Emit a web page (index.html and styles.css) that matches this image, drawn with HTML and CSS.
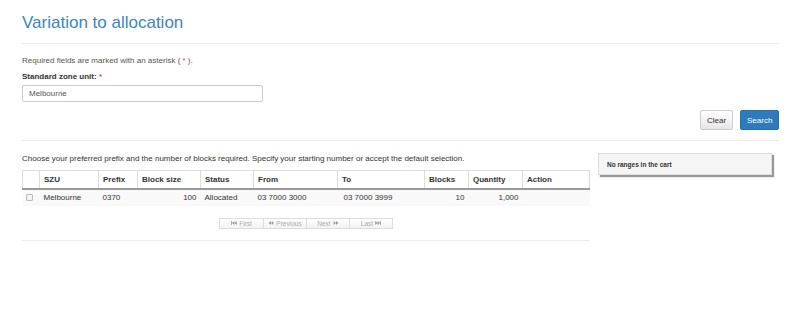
FILE: index.html
```html
<!DOCTYPE html>
<html lang="en">
<head>
    <meta charset="UTF-8">
    <title>Variation to allocation</title>
    <link rel="stylesheet" href="styles.css">
</head>
<body>
    <div class="page">
        <h1 class="page-title">Variation to allocation</h1>
        <hr class="rule">

        <p class="required-note">Required fields are marked with an asterisk ( <span class="star">*</span> ).</p>
        <label class="field-label">Standard zone unit: <span class="star">*</span></label>
        <input type="text" class="field-input" value="Melbourne">

        <div class="actions">
            <button class="btn btn-default">Clear</button>
            <button class="btn btn-primary">Search</button>
        </div>
        <hr class="rule">

        <div class="results">
            <div class="results-main">
                <p class="intro">Choose your preferred prefix and the number of blocks required. Specify your starting number or accept the default selection.</p>

                <table class="ranges">
                    <colgroup>
                        <col style="width: 17px">
                        <col style="width: 59px">
                        <col style="width: 39px">
                        <col style="width: 63px">
                        <col style="width: 53px">
                        <col style="width: 84px">
                        <col style="width: 87px">
                        <col style="width: 44px">
                        <col style="width: 54px">
                        <col style="width: 67px">
                    </colgroup>
                    <thead>
                        <tr>
                            <th></th>
                            <th>SZU</th>
                            <th>Prefix</th>
                            <th>Block size</th>
                            <th>Status</th>
                            <th>From</th>
                            <th>To</th>
                            <th>Blocks</th>
                            <th>Quantity</th>
                            <th>Action</th>
                        </tr>
                    </thead>
                    <tbody>
                        <tr>
                            <td><span class="checkbox"></span></td>
                            <td>Melbourne</td>
                            <td>0370</td>
                            <td class="num">100</td>
                            <td>Allocated</td>
                            <td>03 7000 3000</td>
                            <td class="to">03 7000 3999</td>
                            <td class="num">10</td>
                            <td class="num">1,000</td>
                            <td></td>
                        </tr>
                    </tbody>
                </table>

                <div class="pager">
                    <span class="pager-btn">
                        <svg class="pager-icon" viewBox="0 0 14 10"><rect x="0" y="0" width="2" height="10"/><polygon points="2,5 8,0 8,10"/><polygon points="8,5 14,0 14,10"/></svg>
                        First
                    </span>
                    <span class="pager-btn">
                        <svg class="pager-icon" viewBox="0 0 12 10"><polygon points="0,5 6,0 6,10"/><polygon points="6,5 12,0 12,10"/></svg>
                        Previous
                    </span>
                    <span class="pager-btn">
                        Next
                        <svg class="pager-icon" viewBox="0 0 12 10"><polygon points="0,0 6,5 0,10"/><polygon points="6,0 12,5 6,10"/></svg>
                    </span>
                    <span class="pager-btn">
                        Last
                        <svg class="pager-icon" viewBox="0 0 14 10"><polygon points="0,0 6,5 0,10"/><polygon points="6,0 12,5 6,10"/><rect x="12" y="0" width="2" height="10"/></svg>
                    </span>
                </div>
                <hr class="rule">
            </div>

            <div class="results-side">
                <div class="cart">No ranges in the cart</div>
            </div>
        </div>
    </div>
</body>
</html>
```

FILE: styles.css
```css
* {
    box-sizing: border-box;
}

body {
    margin: 0;
    background: #fff;
    color: #333;
    font-family: 'Liberation Sans', Arial, sans-serif;
    font-size: 8px;
    line-height: 11px;
}

.page {
    padding: 0 21px 0 22px;
}

.page-title {
    margin: 13px 0 10px;
    font-size: 17px;
    line-height: 20px;
    font-weight: normal;
    color: #3a85c6;
}

.rule {
    margin: 0;
    border: 0;
    border-top: 1px solid #eee;
}

.required-note {
    margin: 11px 0 0;
    color: #555;
}

.star {
    color: #d9534f;
}

.field-label {
    display: block;
    margin-top: 5px;
    font-weight: bold;
}

.field-input {
    display: block;
    margin-top: 3px;
    width: 241px;
    height: 17px;
    padding: 0 6px;
    border: 1px solid #ccc;
    border-radius: 2px;
    font-family: inherit;
    font-size: 8px;
    color: #555;
}

.actions {
    display: flex;
    justify-content: flex-end;
    gap: 7px;
    margin: 8px 0 10px;
}

.btn {
    height: 20px;
    padding: 0 6px;
    border-radius: 2px;
    font-family: inherit;
    font-size: 8px;
    cursor: pointer;
}

.btn-default {
    width: 33px;
    background: linear-gradient(#fff, #e6e6e6);
    border: 1px solid #ccc;
    color: #333;
}

.btn-primary {
    width: 39px;
    background: #2d7bbd;
    border: 1px solid #2a6fa9;
    color: #fff;
}

.results {
    display: flex;
    gap: 8px;
}

.results-main {
    width: 568px;
}

.intro {
    margin: 12px 0 6px;
}

.ranges {
    width: 568px;
    table-layout: fixed;
    border-collapse: collapse;
}

.ranges th {
    height: 18px;
    padding: 0 4px;
    text-align: left;
    font-weight: bold;
    border: 1px solid #ddd;
    border-bottom: 2px solid #999;
}

.ranges td {
    height: 17px;
    padding: 0 4px;
    background: #f9f9f9;
    white-space: nowrap;
}

.ranges td.num {
    text-align: right;
}

.ranges td.to {
    padding-left: 6px;
}

.checkbox {
    display: block;
    width: 7px;
    height: 7px;
    margin-left: -1px;
    border: 1px solid #bbb;
    border-radius: 1px;
    background: #f3f3f3;
}

.pager {
    display: flex;
    justify-content: center;
    margin: 12px 0 11px;
}

.pager-btn {
    display: flex;
    align-items: center;
    justify-content: center;
    gap: 2px;
    width: 44px;
    height: 11px;
    border: 1px solid #ddd;
    margin-left: -1px;
    background: linear-gradient(#fff, #f2f2f2);
    color: #aaa;
    font-size: 6.5px;
}

.pager-btn:first-child {
    width: 45px;
    margin-left: 0;
}

.pager-icon {
    width: 6px;
    height: 4px;
    fill: #999;
}

.results-side {
    width: 174px;
    padding-top: 12px;
}

.cart {
    height: 22px;
    padding: 0 8px;
    display: flex;
    align-items: center;
    background: #f5f5f5;
    border: 1px solid #ddd;
    box-shadow: 2px 2px 1px #999;
    font-size: 6.5px;
    font-weight: bold;
}
```
